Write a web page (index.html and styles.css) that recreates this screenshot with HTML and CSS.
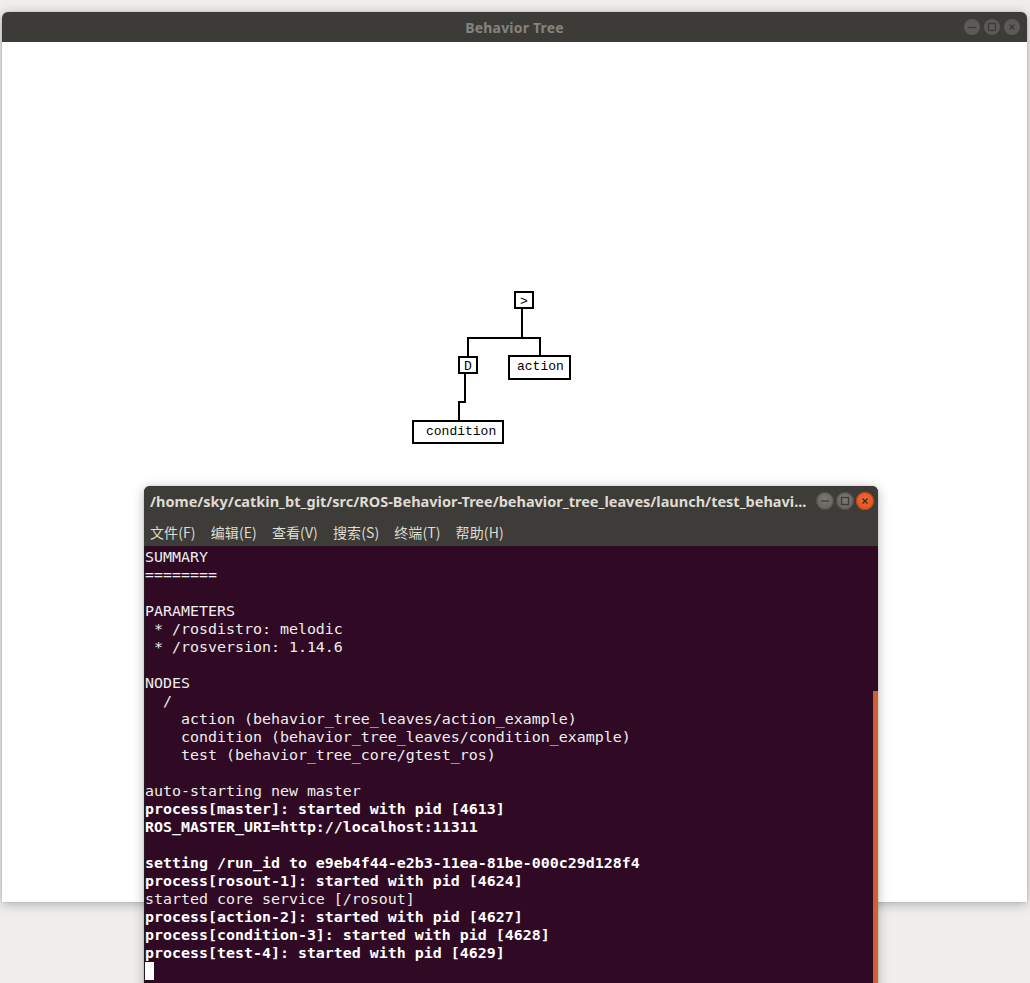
FILE: index.html
```html
<!DOCTYPE html>
<html lang="zh">
<head>
<meta charset="utf-8">
<title>Behavior Tree</title>
<link rel="stylesheet" href="styles.css">
</head>
<body class="desktop">
  <div class="win bt-win">
    <div class="titlebar">
      <span class="bt-title">Behavior Tree</span>
      <div class="btns bt-btns">
        <span class="btn"><svg viewBox="0 0 16 16" width="16" height="16"><path d="M4 8.5H12" stroke="#3a3935" stroke-width="1.2" fill="none"/></svg></span>
        <span class="btn"><svg viewBox="0 0 16 16" width="16" height="16"><rect x="4.5" y="4.5" width="7" height="7" stroke="#3a3935" stroke-width="1.2" fill="none"/></svg></span>
        <span class="btn"><svg viewBox="0 0 16 16" width="16" height="16"><path d="M5.5 5.5L10.5 10.5M10.5 5.5L5.5 10.5" stroke="#3a3935" stroke-width="1.2" fill="none"/></svg></span>
      </div>
    </div>
    <div class="canvas">
      <svg class="tree" viewBox="2 42 1025 860" width="1025" height="860">
        <g fill="none" stroke="#000" stroke-width="2" shape-rendering="crispEdges">
          <rect x="515" y="292" width="18" height="16"/>
          <path d="M522 309V339"/>
          <path d="M468 356V338H540V355"/>
          <rect x="459" y="357" width="18" height="16"/>
          <rect x="509" y="356" width="61" height="23"/>
          <path d="M465 374V402H459V420"/>
          <rect x="413" y="421" width="90" height="22"/>
        </g>
        <g class="node-text">
          <text x="520" y="305">&gt;</text>
          <text x="464" y="370">D</text>
          <text x="517" y="370">action</text>
          <text x="426" y="435">condition</text>
        </g>
      </svg>
    </div>
  </div>

  <div class="win term-win">
    <div class="term-titlebar">
      <span class="term-title">/home/sky/catkin_bt_git/src/ROS-Behavior-Tree/behavior_tree_leaves/launch/test_behavi...</span>
      <div class="btns term-btns">
        <span class="tbtn"><svg viewBox="0 0 18 18" width="18" height="18"><path d="M5 9H13" stroke="#3b3a36" stroke-width="1.2" fill="none"/></svg></span>
        <span class="tbtn"><svg viewBox="0 0 18 18" width="18" height="18"><rect x="5.5" y="5.5" width="7" height="7" stroke="#3b3a36" stroke-width="1.2" fill="none"/></svg></span>
        <span class="tbtn close"><svg viewBox="0 0 18 18" width="18" height="18"><path d="M6.5 6.5L11.5 11.5M11.5 6.5L6.5 11.5" stroke="#3b2a22" stroke-width="1.3" fill="none"/></svg></span>
      </div>
    </div>
    <div class="menubar">
      <span class="menu-item">文件(F)</span>
      <span class="menu-item">编辑(E)</span>
      <span class="menu-item">查看(V)</span>
      <span class="menu-item">搜索(S)</span>
      <span class="menu-item">终端(T)</span>
      <span class="menu-item">帮助(H)</span>
    </div>
    <div class="term-body">
<pre class="term-text">SUMMARY
========

PARAMETERS
 * /rosdistro: melodic
 * /rosversion: 1.14.6

NODES
  /
    action (behavior_tree_leaves/action_example)
    condition (behavior_tree_leaves/condition_example)
    test (behavior_tree_core/gtest_ros)

auto-starting new master
<b>process[master]: started with pid [4613]</b>
<b>ROS_MASTER_URI=http://localhost:11311</b>

<b>setting /run_id to e9eb4f44-e2b3-11ea-81be-000c29d128f4</b>
<b>process[rosout-1]: started with pid [4624]</b>
started core service [/rosout]
<b>process[action-2]: started with pid [4627]</b>
<b>process[condition-3]: started with pid [4628]</b>
<b>process[test-4]: started with pid [4629]</b>
<span class="cursor"> </span></pre>
      <div class="scrollbar"></div>
    </div>
  </div>
</body>
</html>
```

FILE: styles.css
```css
html, body {
  margin: 0;
  padding: 0;
}

.desktop {
  width: 1030px;
  height: 983px;
  background: #efeeec;
  overflow: hidden;
  position: relative;
}

.win {
  position: absolute;
  box-shadow: 0 2px 12px rgba(0, 0, 0, 0.28), 0 0 1px rgba(0, 0, 0, 0.4);
}

/* Behavior Tree window */
.bt-win {
  left: 2px;
  top: 12px;
  width: 1025px;
  height: 890px;
  border-radius: 6px 6px 0 0;
  display: flex;
  flex-direction: column;
  background: #ffffff;
}

.titlebar {
  height: 30px;
  flex: 0 0 30px;
  background: #3c3b37;
  border-radius: 6px 6px 0 0;
  display: flex;
  align-items: center;
  justify-content: center;
  position: relative;
}

.bt-title {
  font-family: "Noto Sans", "Open Sans", sans-serif;
  font-weight: 700;
  font-size: 14px;
  color: #85837e;
  letter-spacing: 0.2px;
}

.btns {
  position: absolute;
  display: flex;
}

.bt-btns {
  right: 7px;
  top: 7px;
  gap: 4px;
}

.btn {
  width: 16px;
  height: 16px;
  border-radius: 50%;
  background: #5b5a56;
  display: flex;
}

.canvas {
  flex: 1;
  background: #ffffff;
}

.tree {
  display: block;
}

.node-text text {
  font-family: "Liberation Mono", "DejaVu Sans Mono", monospace;
  font-size: 13px;
  fill: #000;
}

/* Terminal window */
.term-win {
  left: 144px;
  top: 486px;
  width: 734px;
  height: 520px;
  border-radius: 6px 6px 0 0;
  background: #3c3b37;
  display: flex;
  flex-direction: column;
}

.term-titlebar {
  height: 30px;
  flex: 0 0 30px;
  display: flex;
  align-items: center;
  position: relative;
  padding-left: 6px;
  border-radius: 6px 6px 0 0;
  background: #3d3c38;
}

.term-title {
  font-family: "Noto Sans", "Open Sans", sans-serif;
  font-weight: 700;
  font-size: 14.5px;
  color: #dfdbd2;
  white-space: nowrap;
  letter-spacing: 0;
}

.term-btns {
  right: 4px;
  top: 6px;
  gap: 2px;
}

.tbtn {
  width: 18px;
  height: 18px;
  border-radius: 50%;
  background: radial-gradient(circle at 50% 40%, #7a7873, #5e5d58);
  box-shadow: inset 0 0 0 1px #4a4945;
  display: flex;
}

.tbtn.close {
  background: radial-gradient(circle at 50% 40%, #f06a36, #dd4c17);
  box-shadow: inset 0 0 0 1px #b84317;
}

.menubar {
  height: 30px;
  flex: 0 0 30px;
  display: flex;
  align-items: center;
  padding: 2px 0 0 6px;
  box-sizing: border-box;
  gap: 15px;
  background: #3d3c38;
}

.menu-item {
  font-family: "Noto Sans CJK SC", "Noto Sans", sans-serif;
  font-size: 14px;
  color: #dfdbd2;
  letter-spacing: 0.1px;
}

.term-body {
  flex: 1;
  background: #300a24;
  position: relative;
  border-left: 1px solid #241a20;
}

.term-text {
  margin: 0;
  padding: 2px 0 0 0;
  font-family: "DejaVu Sans Mono", "Liberation Mono", monospace;
  font-size: 14.95px;
  line-height: 18px;
  color: #eeeeec;
  white-space: pre;
}

.term-text b {
  color: #ffffff;
  font-weight: 700;
}

.cursor {
  display: inline-block;
  width: 9px;
  height: 18px;
  background: #ffffff;
  vertical-align: top;
}

.scrollbar {
  position: absolute;
  left: 728px;
  top: 145px;
  width: 5px;
  bottom: 0;
  background: #d0602f;
}
```
